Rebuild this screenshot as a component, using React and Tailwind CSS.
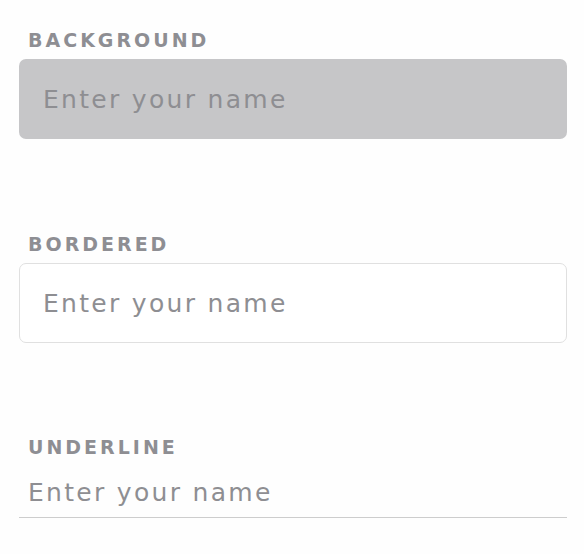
export default function App() {
  return (
    <div className="min-h-[554px] w-[584px] bg-[#fefefe] pt-[28px] font-['DejaVu_Sans',sans-serif]">
      <div className="ml-[19px] w-[548px] flex flex-col">
        <label className="pl-[9px] text-[19px] leading-[24px] font-bold text-[#8e8e93] tracking-[3px]">BACKGROUND</label>
        <input
          placeholder="Enter your name"
          className="mt-[7px] h-[80px] rounded-[7px] bg-[#c6c6c8] px-[24px] text-[25px] tracking-[2.3px] text-[#333] placeholder:text-[#8e8e92] outline-none"
        />

        <label className="mt-[93px] pl-[9px] text-[19px] leading-[24px] font-bold text-[#8e8e93] tracking-[3px]">BORDERED</label>
        <input
          placeholder="Enter your name"
          className="mt-[7px] h-[80px] rounded-[7px] border border-[#e0e0e0] bg-white px-[23px] text-[25px] tracking-[2.3px] text-[#333] placeholder:text-[#8e8e92] outline-none"
        />

        <label className="mt-[92px] pl-[9px] text-[19px] leading-[24px] font-bold text-[#8e8e93] tracking-[3px]">UNDERLINE</label>
        <input
          placeholder="Enter your name"
          className="mt-[9px] h-[50px] border-b-[1.5px] border-[#cdcdcd] bg-transparent px-[9px] text-[25px] tracking-[2.3px] text-[#333] placeholder:text-[#8e8e92] outline-none"
        />
      </div>
    </div>
  );
}
